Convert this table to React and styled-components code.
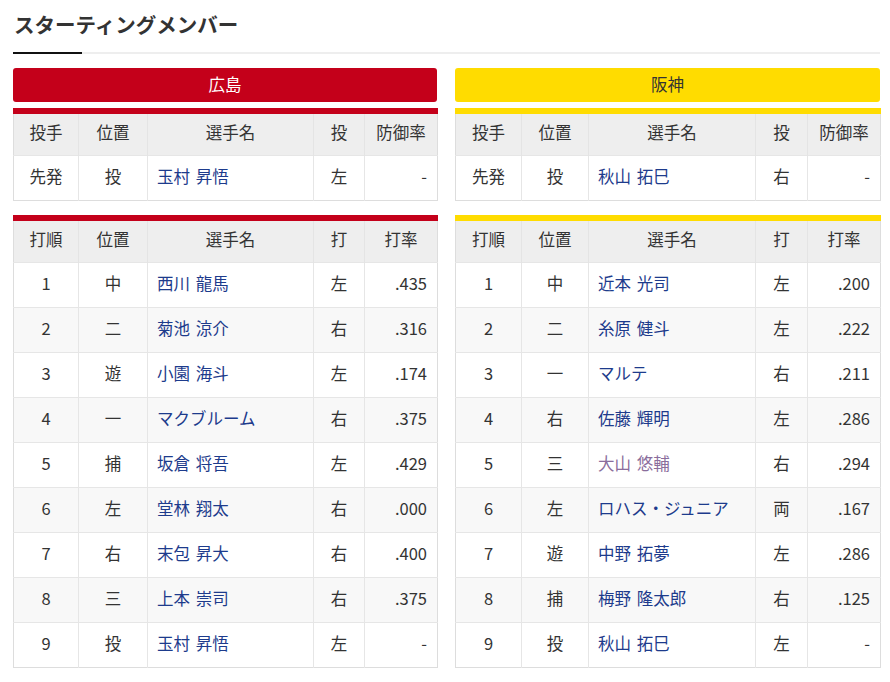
import React from 'react';
import styled, { createGlobalStyle } from 'styled-components';

const GlobalStyle = createGlobalStyle`
  body {
    margin: 0;
    background: #fff;
    font-family: 'Noto Sans CJK JP', 'Liberation Sans', sans-serif;
    color: #333;
  }
`;

const TEAMS = {
  carp: { name: '広島', color: '#c4001a', text: '#fff' },
  tigers: { name: '阪神', color: '#ffdc00', text: '#333' },
};

const lineups = {
  carp: {
    pitcher: { name: '玉村 昇悟', hand: '左', era: '-' },
    batters: [
      ['1', '中', '西川 龍馬', '左', '.435'],
      ['2', '二', '菊池 涼介', '右', '.316'],
      ['3', '遊', '小園 海斗', '左', '.174'],
      ['4', '一', 'マクブルーム', '右', '.375'],
      ['5', '捕', '坂倉 将吾', '左', '.429'],
      ['6', '左', '堂林 翔太', '右', '.000'],
      ['7', '右', '末包 昇大', '右', '.400'],
      ['8', '三', '上本 崇司', '右', '.375'],
      ['9', '投', '玉村 昇悟', '左', '-'],
    ],
  },
  tigers: {
    pitcher: { name: '秋山 拓巳', hand: '右', era: '-' },
    batters: [
      ['1', '中', '近本 光司', '左', '.200'],
      ['2', '二', '糸原 健斗', '左', '.222'],
      ['3', '一', 'マルテ', '右', '.211'],
      ['4', '右', '佐藤 輝明', '左', '.286'],
      ['5', '三', '大山 悠輔', '右', '.294', true],
      ['6', '左', 'ロハス・ジュニア', '両', '.167'],
      ['7', '遊', '中野 拓夢', '左', '.286'],
      ['8', '捕', '梅野 隆太郎', '右', '.125'],
      ['9', '投', '秋山 拓巳', '左', '-'],
    ],
  },
};

const Page = styled.div`
  padding: 6px 10px 12px 13px;
`;

const Title = styled.h2`
  margin: 0;
  padding: 0 1px;
  font-size: 20.5px;
  font-weight: bold;
  line-height: 36px;
  color: #333;
`;

const Rule = styled.div`
  margin-top: 10px;
  height: 2px;
  background: #eee;
  position: relative;
  &::before {
    content: '';
    position: absolute;
    left: 0;
    top: 0;
    width: 69px;
    height: 2px;
    background: #111;
  }
`;

const Columns = styled.div`
  display: grid;
  grid-template-columns: 424px 425px;
  gap: 18px;
  margin-top: 14px;
`;

const Side = styled.div`
  display: flex;
  flex-direction: column;
`;

const TeamBar = styled.div`
  height: 34px;
  line-height: 32px;
  border-radius: 3px;
  text-align: center;
  font-size: 16.5px;
  background: ${p => p.$color};
  color: ${p => p.$text};
`;

const Table = styled.table`
  width: 100%;
  border-collapse: collapse;
  table-layout: fixed;
  border: 1px solid #ddd;
  border-top: 6px solid ${p => p.$color};
  margin-top: ${p => p.$gap}px;
  font-size: 16.5px;
  line-height: 20px;
`;

const Th = styled.th`
  height: 36px;
  padding: 0 0 5px;
  background: #eee;
  font-weight: normal;
  color: #333;
  text-align: center;
  border-left: 1px solid #e4e4e4;
  &:first-child { border-left: none; }
`;

const Tr = styled.tr`
  background: ${p => (p.$striped ? '#f8f8f8' : '#fff')};
  border-top: 1px solid #e6e6e6;
`;

const Td = styled.td`
  height: 39px;
  padding: 0 ${p => (p.$align === 'right' ? '10px' : p.$align === 'left' ? '9px' : '0')} 5px;
  text-align: ${p => p.$align || 'center'};
  border-left: 1px solid #e6e6e6;
  &:first-child { border-left: none; }
`;

const PlayerLink = styled.a`
  color: ${p => (p.$visited ? '#8a6d9c' : '#1d3b8c')};
  text-decoration: none;
  white-space: nowrap;
  word-spacing: 2px;
`;

const widths = {
  carp: [65, 69, 166, 51, 73],
  tigers: [66, 67, 167, 52, 73],
};

function Cols({ team }) {
  return (
    <colgroup>
      {widths[team].map((w, i) => (
        <col key={i} style={{ width: w }} />
      ))}
    </colgroup>
  );
}

function TeamLineup({ team }) {
  const t = TEAMS[team];
  const l = lineups[team];
  return (
    <Side>
      <TeamBar $color={t.color} $text={t.text}>{t.name}</TeamBar>
      <Table $color={t.color} $gap={6}>
        <Cols team={team} />
        <thead>
          <tr>
            <Th>投手</Th>
            <Th>位置</Th>
            <Th>選手名</Th>
            <Th>投</Th>
            <Th>防御率</Th>
          </tr>
        </thead>
        <tbody>
          <Tr>
            <Td>先発</Td>
            <Td>投</Td>
            <Td $align="left"><PlayerLink href="#">{l.pitcher.name}</PlayerLink></Td>
            <Td>{l.pitcher.hand}</Td>
            <Td $align="right">{l.pitcher.era}</Td>
          </Tr>
        </tbody>
      </Table>
      <Table $color={t.color} $gap={14}>
        <Cols team={team} />
        <thead>
          <tr>
            <Th>打順</Th>
            <Th>位置</Th>
            <Th>選手名</Th>
            <Th>打</Th>
            <Th>打率</Th>
          </tr>
        </thead>
        <tbody>
          {l.batters.map(([no, pos, name, hand, avg, visited], i) => (
            <Tr key={no} $striped={i % 2 === 1}>
              <Td>{no}</Td>
              <Td>{pos}</Td>
              <Td $align="left"><PlayerLink href="#" $visited={visited}>{name}</PlayerLink></Td>
              <Td>{hand}</Td>
              <Td $align="right">{avg}</Td>
            </Tr>
          ))}
        </tbody>
      </Table>
    </Side>
  );
}

export default function App() {
  return (
    <>
      <GlobalStyle />
      <Page>
        <Title>スターティングメンバー</Title>
        <Rule />
        <Columns>
          <TeamLineup team="carp" />
          <TeamLineup team="tigers" />
        </Columns>
      </Page>
    </>
  );
}
